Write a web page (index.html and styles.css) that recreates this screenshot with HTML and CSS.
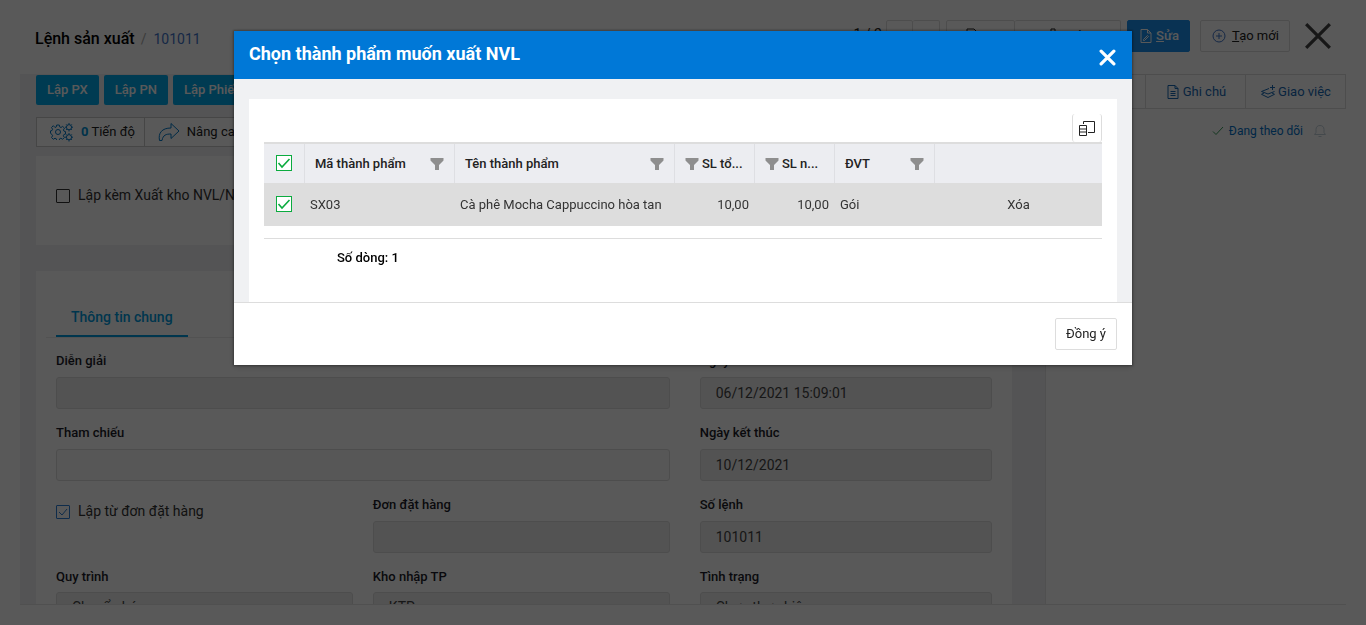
FILE: index.html
```html
<!DOCTYPE html>
<html lang="vi">
<head>
<meta charset="utf-8">
<meta name="viewport" content="width=device-width, initial-scale=1">
<title>Lệnh sản xuất</title>
<link rel="stylesheet" href="styles.css">
</head>
<body>
<svg class="symbols" aria-hidden="true">
  <symbol id="funnel" viewBox="0 0 14 14"><path d="M.5 1h13v2.500L9 8v5H5V8L.5 3.500z" fill="#8e8e8e"/></symbol>
  <symbol id="gear" viewBox="0 0 16 16"><path d="M6.700 1h2.600l.4 1.900 1.300.6 1.700-1.100 1.800 1.800-1.100 1.700.6 1.300 1.500.4v2.400l-1.600.5-.6 1.300 1.100 1.700-1.800 1.800-1.700-1.100-1.300.6-.4 1.900H6.700l-.4-1.900-1.300-.6-1.700 1.100-1.800-1.800 1.100-1.700-.6-1.300L.5 9.300V6.900L2 6.500l.6-1.300-1.100-1.700 1.800-1.800L5 3.500l1.300-.6z"/><circle cx="8" cy="8" r="2.500"/></symbol>
</svg>

<header class="page-head">
  <h1 class="page-title">Lệnh sản xuất</h1>
  <span class="slash">/</span>
  <a class="doc-no" href="#">101011</a>
  <div class="head-actions">
    <span class="position">1 / 2</span>
    <div class="group pager">
      <button class="btn" type="button" aria-label="Trước">‹</button>
      <button class="btn" type="button" aria-label="Sau">›</button>
    </div>
    <div class="group tools">
      <button class="btn" type="button"><svg class="icon" viewBox="0 0 16 16"><path d="M3 1h7l3 3v11H3z"/></svg>In</button>
      <button class="btn" type="button"><svg class="icon" viewBox="0 0 16 16"><path d="M2 4h12M6 4V1h4v3M4 4v11h8V4"/></svg>Xóa</button>
    </div>
    <button class="btn edit" type="button"><svg class="icon" viewBox="0 0 14 16"><path d="M2 1.500h6.500l3.500 3.500v9.500H2zM8.500 1.500V5H12M4.500 11.500l4-4 1 1-4 4H4.500z"/></svg><span><u>S</u>ửa</span></button>
    <button class="btn create" type="button"><svg class="icon" viewBox="0 0 16 16"><circle cx="8" cy="8" r="6"/><path d="M8 5v6M5 8h6"/></svg><span><u>T</u>ạo mới</span></button>
    <button class="page-close" type="button" aria-label="Đóng trang"><svg viewBox="0 0 26 26"><path d="M2 2l22 22M24 2L2 24"/></svg></button>
  </div>
</header>

<main class="workspace">
  <section class="content">
    <div class="create-row">
      <button class="create-btn" type="button">Lập PX</button>
      <button class="create-btn" type="button">Lập PN</button>
      <button class="create-btn" type="button">Lập Phiếu</button>
    </div>
    <div class="group step-row">
      <button class="step" type="button"><svg class="gears" viewBox="0 0 24 20"><use href="#gear" x="0" y="2" width="16" height="16"/><path d="M19 1v1.500M19 8v1.500M15 5.200h1.500M21.500 5.200H23M16.200 2.400l1 1M20.800 7l1 1M16.200 8l1-1M20.800 3.400l1-1M19 11v1.500M19 18v1.500M15 15.200h1.500M21.500 15.200H23M16.200 12.400l1 1M20.800 17l1 1M16.200 18l1-1M20.800 13.400l1-1"/><circle cx="19" cy="5.200" r="2.600"/><circle cx="19" cy="15.200" r="2.600"/></svg><span><b>0</b> Tiến độ</span></button>
      <button class="step" type="button"><svg class="arrow" viewBox="0 0 22 20"><path d="M13 1.500l8 7.500-8 7.500v-4.500C8 12 5 13 4 18.500H1.500C0 11 4 6 13 6z"/></svg><span>Nâng cao</span></button>
    </div>
    <div class="card options">
      <label class="check"><input type="checkbox">Lập kèm Xuất kho NVL/NC</label>
    </div>
    <div class="card details">
      <div class="tabs"><button class="tab" type="button">Thông tin chung</button></div>
      <form class="form">
        <div class="form-col two">
          <div class="field wide"><label for="note">Diễn giải</label><input id="note" type="text" disabled></div>
          <div class="field wide"><label for="ref">Tham chiếu</label><input id="ref" class="open" type="text"></div>
          <label class="check from-order"><input type="checkbox" checked>Lập từ đơn đặt hàng</label>
          <div class="field"><label for="order">Đơn đặt hàng</label><input id="order" type="text" disabled></div>
          <div class="field choice"><label for="process">Quy trình</label><select id="process" disabled><option>Chuyển hóa</option></select></div>
          <div class="field choice"><label for="store">Kho nhập TP</label><select id="store" disabled><option>KTP</option></select></div>
        </div>
        <div class="form-col">
          <div class="field"><label for="date">Ngày</label><input id="date" type="text" value="06/12/2021 15:09:01" disabled></div>
          <div class="field"><label for="end">Ngày kết thúc</label><input id="end" type="text" value="10/12/2021" disabled></div>
          <div class="field"><label for="number">Số lệnh</label><input id="number" type="text" value="101011" disabled></div>
          <div class="field choice"><label for="status">Tình trạng</label><select id="status" disabled><option>Chưa thực hiện</option></select></div>
        </div>
      </form>
    </div>
  </section>
  <aside class="side">
    <div class="side-tabs">
      <button class="side-tab" type="button" aria-label="Trao đổi"></button>
      <button class="side-tab" type="button"><svg class="icon" viewBox="0 0 14 16"><path d="M2 1.500h7L12 4.500v10H2zM9 1.500v3h3M4.500 7.500h5M4.500 9.500h5M4.500 11.500h5"/></svg>Ghi chú</button>
      <button class="side-tab" type="button"><svg class="icon" viewBox="0 0 16 16"><path d="M9 4.500L1.500 7.500 8 10l6.500-2.500M4 9l-2.500 1.300L8 13.500l6.500-3.200L12 9M12.500 1v5M10 3.500h5"/></svg>Giao việc</button>
    </div>
    <div class="follow">
      <svg class="tick" viewBox="0 0 12 12"><path d="M1 6.500l3 3L11 2"/></svg>
      <a href="#">Đang theo dõi</a>
      <svg class="bell" viewBox="0 0 14 14"><path d="M1.500 10.500h11L11 8.500V5.500C11 3 9.500 1.500 7 1.500S3 3 3 5.500v3zM5.500 12.500h3"/></svg>
    </div>
  </aside>
</main>

<div class="overlay">
  <div class="modal" role="dialog" aria-modal="true" aria-labelledby="modal-title">
    <div class="modal-head">
      <h2 id="modal-title">Chọn thành phẩm muốn xuất NVL</h2>
      <button class="modal-close" type="button" aria-label="Đóng"><svg viewBox="0 0 16 16"><path d="M2 2l12 12M14 2L2 14"/></svg></button>
    </div>
    <div class="modal-body">
      <div class="panel">
        <div class="grid-tools"><button class="columns-btn" type="button" aria-label="Chọn cột"><svg viewBox="0 0 18 18"><path d="M5.500 5V2.500h11v11H10M1.500 6.500h7v10h-7zM1.500 10h7M1.500 13h7"/></svg></button></div>
        <table class="grid">
          <colgroup><col class="c-check"><col class="c-code"><col class="c-name"><col class="c-qty"><col class="c-qty"><col class="c-unit"><col></colgroup>
          <thead><tr>
            <th><input type="checkbox" checked aria-label="Chọn tất cả"></th>
            <th><div class="th"><span>Mã thành phẩm</span><svg class="funnel"><use href="#funnel"/></svg></div></th>
            <th><div class="th"><span>Tên thành phẩm</span><svg class="funnel"><use href="#funnel"/></svg></div></th>
            <th><div class="th qty"><svg class="funnel"><use href="#funnel"/></svg><span>SL tổ...</span></div></th>
            <th><div class="th qty"><svg class="funnel"><use href="#funnel"/></svg><span>SL n...</span></div></th>
            <th><div class="th"><span>ĐVT</span><svg class="funnel"><use href="#funnel"/></svg></div></th>
            <th></th>
          </tr></thead>
          <tbody><tr>
            <td class="mid"><input type="checkbox" checked aria-label="Chọn SX03"></td>
            <td>SX03</td><td>Cà phê Mocha Cappuccino hòa tan</td><td class="num">10,00</td><td class="num">10,00</td><td>Gói</td><td class="mid">Xóa</td>
          </tr></tbody>
        </table>
        <div class="summary">Số dòng: 1</div>
      </div>
    </div>
    <div class="modal-foot"><button class="btn ok" type="button">Đồng ý</button></div>
  </div>
</div>
</body>
</html>
```

FILE: styles.css
```css
* { box-sizing: border-box; }
body {
  margin: 0;
  height: 100vh;
  display: flex;
  flex-direction: column;
  overflow: hidden;
  background: #fff;
  color: #222;
  font: 13px/16px Roboto, "Noto Sans", sans-serif;
}
button, input, select { font: inherit; color: inherit; }
button { cursor: pointer; }
a { text-decoration: none; }
svg { fill: none; stroke: currentColor; flex: none; }
.symbols { display: none; }
.icon { width: 16px; height: 16px; }

/* page header */
.page-head {
  display: flex;
  align-items: flex-start;
  height: 74px;
  padding: 20px 34px 0 35px;
  flex: none;
}
.page-title, .slash, .doc-no { padding-top: 7px; line-height: 24px; }
.page-title { margin: 0; font-size: 16px; font-weight: 500; color: #000; }
.slash { margin: 0 7px 0 6px; font-size: 14px; color: #aaa; }
.doc-no { color: #3f74c8; font-size: 14px; }
.head-actions { display: flex; align-items: center; margin-left: auto; }
.position { margin-right: 4px; padding-bottom: 4px; font-size: 14px; }
.group { display: flex; }
.btn {
  height: 32px;
  display: flex;
  align-items: center;
  justify-content: center;
  gap: 6px;
  padding: 0 10px;
  background: #fff;
  border: 1px solid #ddd;
  border-radius: 2px;
}
.group .btn + .btn { border-left: 0; }
.pager { margin-right: 6px; }
.pager .btn { width: 27px; padding: 0; }
.tools { margin-right: 6px; }
.tools .btn { width: 69px; }
.tools .btn + .btn { width: 106px; }
.btn.edit { width: 63px; padding: 0; gap: 2px; background: #1b90ee; border-color: #1b90ee; color: #fff; font-weight: 500; }
.btn.create { width: 90px; margin: 0 14px 0 10px; padding: 0; gap: 5px; }
.create .icon { color: #3f74c8; }
.page-close { width: 28px; height: 32px; padding: 0; border: 0; background: none; color: #444; }
.page-close svg { display: block; width: 28px; height: 28px; stroke-width: 3; }

/* workspace */
.workspace {
  flex: 1;
  min-height: 0;
  display: flex;
  margin: 0 20px 20px;
  border-bottom: 1px solid #e4e4e4;
  overflow: hidden;
}
.content { flex: 1; min-width: 0; padding: 1px 33px 0 16px; background: #f0f1f3; }
.create-row { display: flex; gap: 5px; }
.create-btn {
  height: 30px;
  padding: 0 11px;
  border: 0;
  border-radius: 2px;
  background: #00a9ec;
  color: #fff;
  font-weight: 500;
}
.step-row { margin: 12px 0 9px; }
.step {
  height: 30px;
  display: flex;
  align-items: center;
  gap: 7px;
  padding: 0 9px 0 13px;
  background: #fff;
  border: 1px solid #c8c8c8;
}
.step + .step { border-left: 0; }
.step b { color: #0091d4; }
.gears, .arrow { width: 24px; height: 20px; color: #0078c8; }
.arrow { width: 22px; }
.card { background: #fff; }
.options { padding: 31px 20px 42px; margin-bottom: 26px; }
.check { display: flex; align-items: center; gap: 8px; font-size: 14px; color: #333; }
.check input {
  appearance: none;
  width: 14px;
  height: 14px;
  margin: 2px 0 0;
  border: 1px solid #333;
  border-radius: 1px;
}
.check input:checked {
  border-color: #2d7fd6;
  background: url("data:image/svg+xml,%3Csvg xmlns='http://www.w3.org/2000/svg' viewBox='0 0 12 12'%3E%3Cpath d='M2 6l3 3 5-6' fill='none' stroke='%232d7fd6'/%3E%3C/svg%3E");
}
.details { padding: 28px 10px 40px; }
.tabs { padding-left: 10px; border-bottom: 1px solid #eaeaea; }
.tab {
  height: 38px;
  padding: 0 15px;
  border: 0;
  border-bottom: 2px solid #009be0;
  background: none;
  color: #009be0;
  font-size: 14px;
  font-weight: 500;
}
.form { display: grid; grid-template-columns: 21fr 10fr; gap: 30px; padding: 15px 10px 0; }
.form-col { display: grid; gap: 16px 20px; align-content: start; }
.form-col.two { grid-template-columns: 1fr 1fr; }
.wide { grid-column: 1 / -1; }
.field { display: flex; flex-direction: column; gap: 8px; min-width: 0; }
.field label { font-weight: 500; color: #1c1c28; }
.field input, .field select {
  width: 100%;
  height: 32px;
  padding: 0 15px;
  border: 1px solid #dcdcdc;
  border-radius: 3px;
  background: #ededed;
  color: #444;
  font-size: 14px;
}
.field select { appearance: none; height: 30px; opacity: 1; }
.field.choice { gap: 7px; }
.field input.open { background: #f8f8f8; }
.from-order { align-self: start; padding-top: 6px; }

/* right column */
.side { width: 301px; background: #fff; border-left: 1px solid #e4e4e4; }
.side-tabs { display: flex; height: 35px; border: 1px solid #ddd; border-left: 0; }
.side-tab {
  flex: 1;
  display: flex;
  align-items: center;
  justify-content: center;
  gap: 2px;
  padding: 0;
  border: 0;
  background: none;
  color: #1769b5;
}
.side-tab + .side-tab { border-left: 1px solid #ddd; }
.follow { display: flex; align-items: center; justify-content: flex-end; gap: 5px; padding: 14px 19px 0 0; font-size: 12px; }
.follow a { color: #0070c8; margin-right: 5px; }
.tick { width: 12px; height: 12px; color: #3b9c5c; }
.bell { width: 14px; height: 14px; color: #c4d0da; }

/* dialog */
.overlay {
  position: fixed;
  inset: 0;
  padding: 31px 20px;
  background: rgba(0, 0, 0, .65);
}
.modal { max-width: 898px; margin: 0 auto; background: #fff; box-shadow: 0 0 2px 1px rgba(0, 0, 0, .3), 0 2px 6px rgba(0, 0, 0, .2); }
.modal-head {
  display: flex;
  align-items: center;
  justify-content: space-between;
  height: 48px;
  padding: 0 16px 0 15px;
  background: #0078d7;
  color: #fff;
}
.modal-head h2 { margin: 0 0 2px; font-size: 18px; line-height: 24px; font-weight: 700; }
.modal-close { padding: 4px 0 0; border: 0; background: none; color: #fff; }
.modal-close svg { display: block; width: 17px; height: 17px; stroke-width: 3; stroke-linecap: round; }
.modal-body { padding: 20px 15px 0; background: #f0f1f3; }
.panel { padding: 15px 15px 36px; background: #fff; }
.grid-tools { display: flex; justify-content: flex-end; }
.columns-btn {
  width: 30px;
  height: 28px;
  padding: 0 5px;
  border: solid #ddd;
  border-width: 0 1px;
  border-radius: 3px;
  background: #fff;
}
.columns-btn svg { display: block; width: 18px; height: 18px; color: #222; }
.grid {
  width: 100%;
  table-layout: fixed;
  border-collapse: separate;
  border-spacing: 0;
  border-top: 2px solid #ddd;
}
.c-check { width: 40px; }
.c-code { width: 150px; }
.c-name { width: 220px; }
.c-qty { width: 80px; }
.c-unit { width: 100px; }
.grid th { height: 39px; padding: 0; background: #ecedf1; font-weight: 500; }
.grid th + th { border-left: 1px solid #dedfe3; }
.grid td { height: 43px; padding: 0 5px; background: #ddd; color: #333; }
.grid td + td { border-left: 1px solid #ddd; }
.grid .mid { text-align: center; }
.grid .num { text-align: right; }
.grid input {
  appearance: none;
  display: block;
  width: 16px;
  height: 16px;
  margin: 0 auto 2px;
  border: 1px solid #0bab3f;
  background: #fff url("data:image/svg+xml,%3Csvg xmlns='http://www.w3.org/2000/svg' viewBox='0 0 14 14'%3E%3Cpath d='M1.500 7l3.500 4L12.500 3' fill='none' stroke='%230bab3f' stroke-width='1.600'/%3E%3C/svg%3E");
}
.th { display: flex; align-items: center; justify-content: space-between; padding: 0 10px; }
.th span { white-space: nowrap; }
.th.qty { justify-content: flex-start; gap: 3px; }
.funnel { width: 14px; height: 14px; stroke: none; }
.summary { margin-top: 12px; padding: 11px 0 0 73px; border-top: 1px solid #ddd; color: #000; font-weight: 500; }
.modal-foot { display: flex; justify-content: flex-end; padding: 15px; border-top: 1px solid #ddd; }
.btn.ok { width: 62px; padding: 0; }
```
